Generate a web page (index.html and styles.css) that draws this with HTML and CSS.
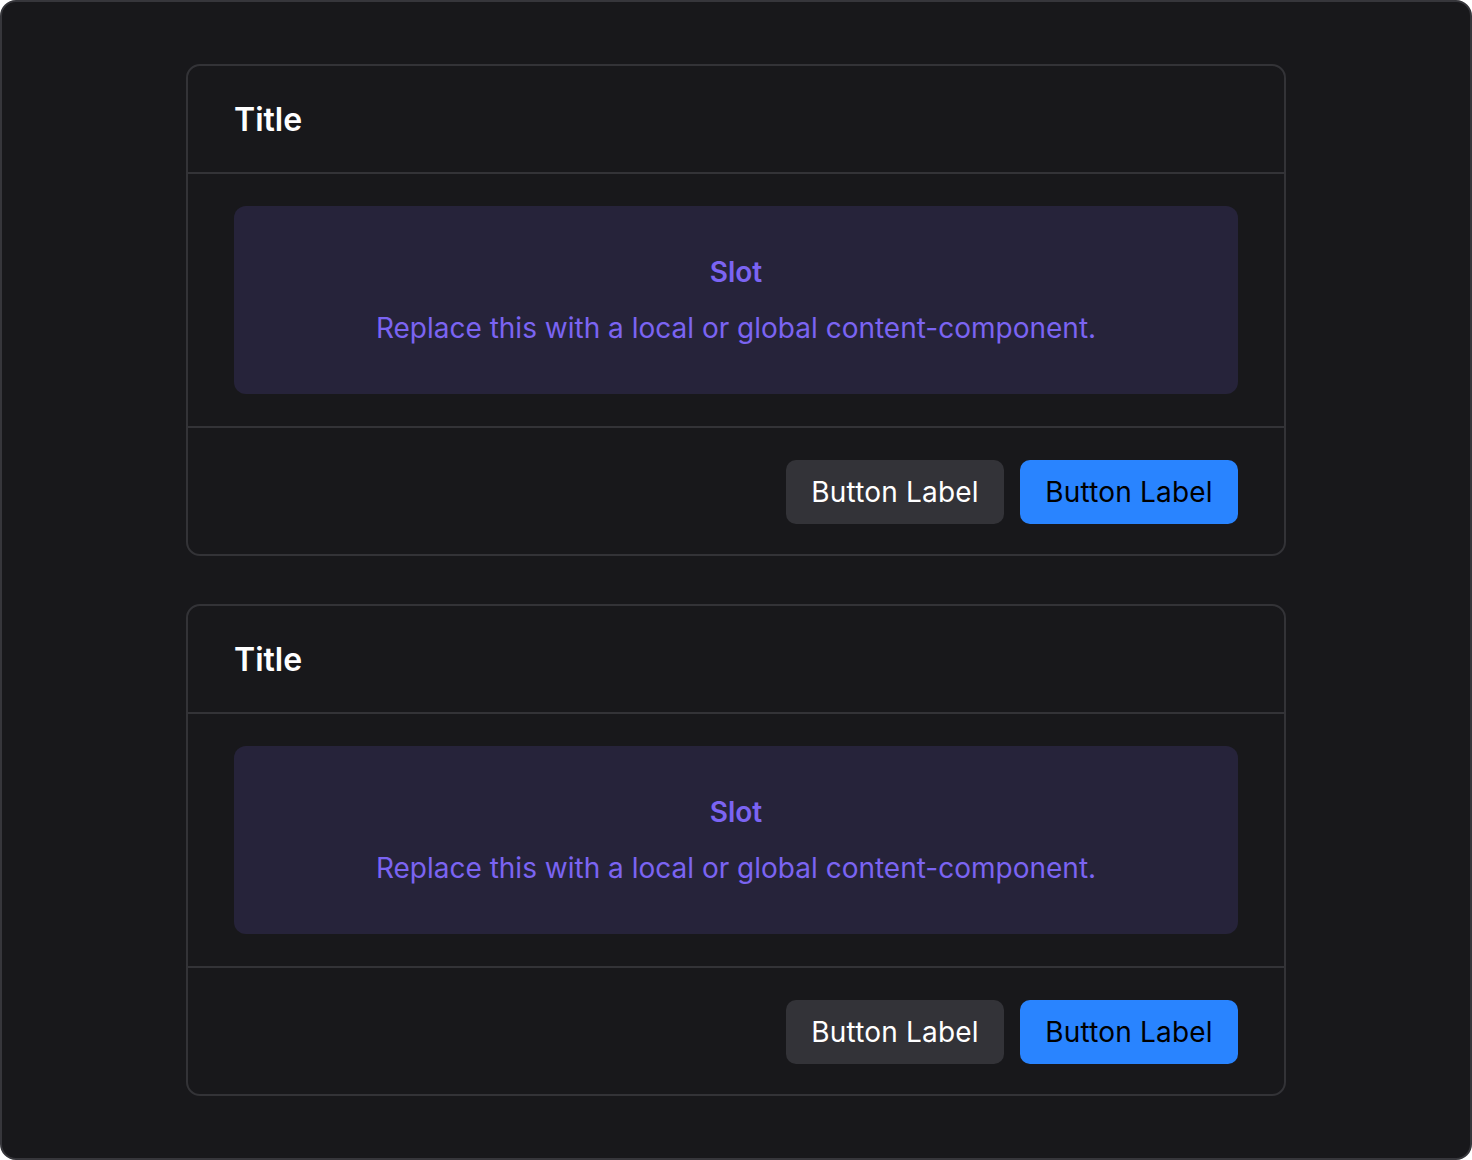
FILE: index.html
```html
<!DOCTYPE html>
<html lang="en">
  <head>
    <meta charset="UTF-8" />
    <meta name="viewport" content="width=device-width, initial-scale=1.0" />
    <title>Dialog</title>
    <link rel="stylesheet" href="styles.css">
  </head>
  <body>
    <div class="frame">
      <div class="card">
        <div class="card-header">
          <h1 class="card-title">Title</h1>
        </div>
        <div class="card-body">
          <div class="slot">
            <p class="slot-title">Slot</p>
            <p class="slot-text">Replace this with a local or global content-component.</p>
          </div>
        </div>
        <div class="card-footer">
          <button class="btn btn-secondary">Button Label</button>
          <button class="btn btn-primary">Button Label</button>
        </div>
      </div>

      <div class="card">
        <div class="card-header">
          <h1 class="card-title">Title</h1>
        </div>
        <div class="card-body">
          <div class="slot">
            <p class="slot-title">Slot</p>
            <p class="slot-text">Replace this with a local or global content-component.</p>
          </div>
        </div>
        <div class="card-footer">
          <button class="btn btn-secondary">Button Label</button>
          <button class="btn btn-primary">Button Label</button>
        </div>
      </div>
    </div>
  </body>
</html>
```

FILE: styles.css
```css
* {
  box-sizing: border-box;
}

body {
  font-family: Inter, "Noto Sans", sans-serif;
  background-color: #fff;
  margin: 0;
  padding: 0;
}

.frame {
  width: 1472px;
  height: 1160px;
  background-color: #18181b;
  border: 2px solid #36363b;
  border-radius: 16px;
  padding: 62px 184px;
  display: flex;
  flex-direction: column;
  gap: 48px;
}

.card {
  border: 2px solid #333337;
  border-radius: 14px;
  background-color: #18181b;
}

.card-header {
  height: 108px;
  padding: 0 46px;
  display: flex;
  align-items: center;
  border-bottom: 2px solid #333337;
}

.card-title {
  margin: 0;
  font-size: 32px;
  font-weight: 600;
  color: #fff;
}

.card-body {
  padding: 32px 46px;
  border-bottom: 2px solid #333337;
}

.slot {
  height: 188px;
  background-color: #26233a;
  border-radius: 12px;
  display: flex;
  flex-direction: column;
  align-items: center;
  justify-content: center;
  gap: 20px;
  color: #7b64f2;
}

.slot p {
  margin: 0;
}

.slot-title {
  font-size: 28px;
  font-weight: 600;
  line-height: 36px;
}

.slot-text {
  font-size: 28px;
  line-height: 36px;
}

.card-footer {
  padding: 32px 46px 30px;
  display: flex;
  justify-content: flex-end;
  gap: 16px;
}

.btn {
  height: 64px;
  width: 218px;
  border: none;
  border-radius: 10px;
  font-family: inherit;
  font-size: 28px;
  letter-spacing: 0.2px;
  cursor: pointer;
}

.btn-secondary {
  background-color: #333338;
  color: #fff;
}

.btn-primary {
  background-color: #2984ff;
  color: #000;
}
```
